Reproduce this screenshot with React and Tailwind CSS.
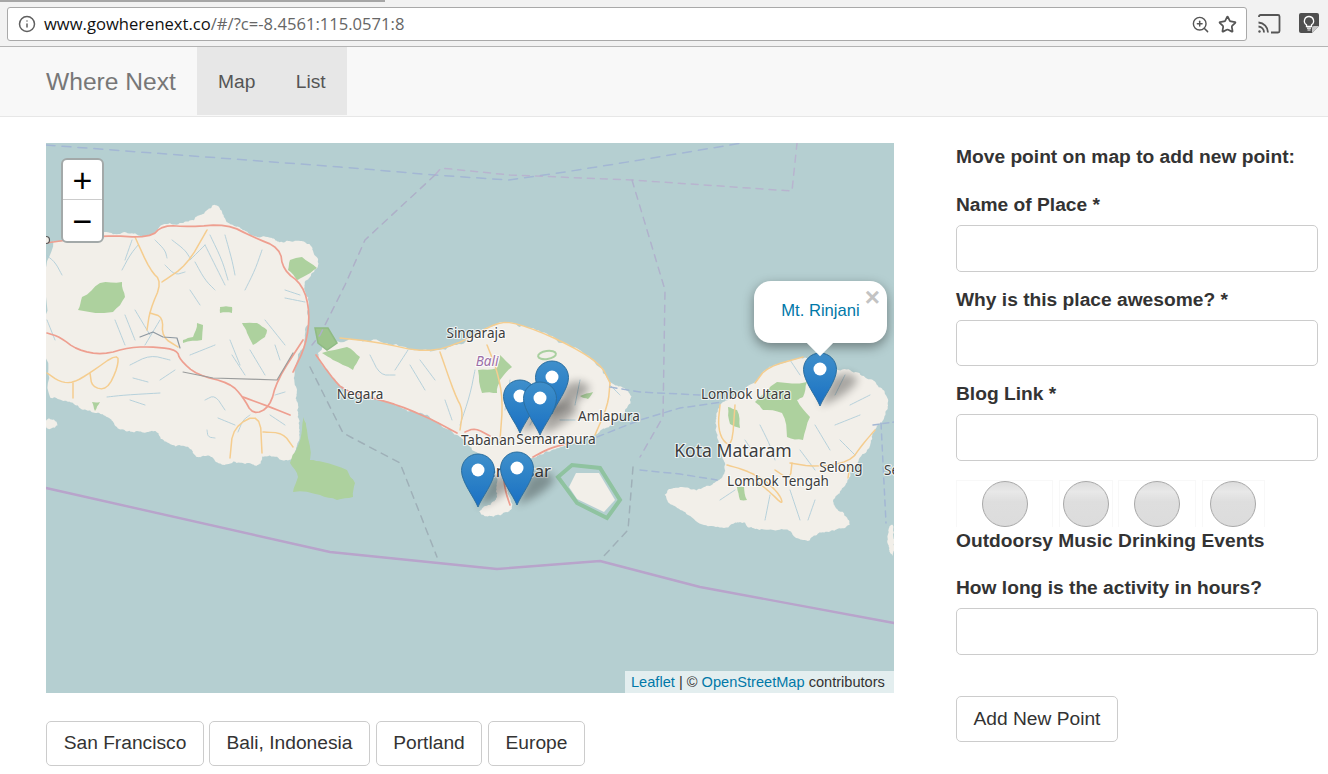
import React from "react";
import { Info, ZoomIn, Star } from "lucide-react";

const FONT = { fontFamily: '"Liberation Sans", Arial, sans-serif' };

const pts = (a) => a.map((p) => p.join(",")).join(" ");

function chaikin(a, closed, n = 2) {
  let cur = a;
  for (let k = 0; k < n; k++) {
    const out = closed ? [] : [cur[0]];
    const len = closed ? cur.length : cur.length - 1;
    for (let i = 0; i < len; i++) {
      const p = cur[i];
      const q = cur[(i + 1) % cur.length];
      out.push([p[0] * 0.75 + q[0] * 0.25, p[1] * 0.75 + q[1] * 0.25]);
      out.push([p[0] * 0.25 + q[0] * 0.75, p[1] * 0.25 + q[1] * 0.75]);
    }
    if (!closed) out.push(cur[cur.length - 1]);
    cur = out;
  }
  return cur;
}

function hash(n) {
  const s = Math.sin(n * 127.1 + 311.7) * 43758.5453;
  return s - Math.floor(s) - 0.5;
}

function rough(a, amp = 0.16, levels = 3) {
  let cur = a;
  let seed = a[0][0] + a[0][1];
  for (let k = 0; k < levels; k++) {
    const out = [];
    for (let i = 0; i < cur.length; i++) {
      const p = cur[i];
      const q = cur[(i + 1) % cur.length];
      const dx = q[0] - p[0];
      const dy = q[1] - p[1];
      const d = Math.min(Math.hypot(dx, dy) * amp, 4);
      seed += 1.37;
      const h = hash(seed) * 2;
      const l = Math.hypot(dx, dy) || 1;
      out.push(p);
      out.push([(p[0] + q[0]) / 2 - (dy / l) * d * h, (p[1] + q[1]) / 2 + (dx / l) * d * h]);
    }
    cur = out;
  }
  return cur.map((p) => [Math.round(p[0] * 10) / 10, Math.round(p[1] * 10) / 10]);
}

const LAND = [
  [[46,243],[75,236],[103,233],[130,232],[150,237],[163,223],[190,223],[205,212],[215,203],[222,212],[227,223],[240,228],[253,237],[268,236],[280,243],[290,240],[310,243],[320,263],[312,275],[303,283],[310,313],[303,343],[293,373],[298,400],[297,413],[300,430],[298,445],[290,463],[263,453],[260,467],[247,462],[220,465],[210,455],[197,458],[190,447],[162,442],[157,430],[137,433],[117,428],[107,415],[90,412],[73,403],[63,400],[46,397]],
  [[46,418],[56,420],[58,427],[46,430]],
  [[317,350],[340,338],[377,342],[427,353],[463,342],[497,322],[517,323],[560,340],[600,363],[610,383],[632,393],[630,407],[610,425],[593,437],[560,447],[533,457],[520,465],[510,470],[506,490],[512,505],[512,510],[497,517],[482,516],[478,510],[495,503],[498,490],[493,463],[473,450],[457,433],[427,417],[390,402],[350,395],[337,383],[320,363]],
  [[888,527],[894,524],[894,557],[889,552]],
  [[717,413],[720,405],[755,383],[767,367],[803,357],[837,367],[867,375],[887,393],[888,413],[873,430],[870,447],[853,470],[843,490],[830,503],[853,523],[840,530],[817,533],[807,543],[787,530],[750,530],[743,520],[712,530],[680,510],[663,497],[670,487],[697,490],[717,483],[727,470],[720,447],[715,427]],
];

const GREEN = [
  [[82,297],[100,283],[122,282],[125,297],[113,312],[78,310]],
  [[220,307],[232,307],[232,313],[220,313]],
  [[197,323],[203,325],[202,340],[183,343],[183,340],[193,337]],
  [[242,323],[257,323],[267,330],[265,337],[253,345],[247,333]],
  [[290,260],[302,257],[317,268],[303,277],[297,280],[288,270]],
  [[92,402],[100,402],[95,411]],
  [[303,417],[307,430],[310,460],[323,462],[347,470],[355,483],[353,497],[337,500],[320,495],[293,492],[298,477],[290,463],[297,448],[302,430]],
  [[322,353],[347,347],[360,357],[353,370],[333,360]],
  [[478,370],[497,368],[500,355],[512,367],[500,380],[497,393],[482,393]],
  [[580,396],[593,392],[588,399]],
  [[755,402],[777,382],[807,382],[803,397],[797,400],[810,417],[803,440],[787,437],[782,413],[763,410]],
  [[728,407],[737,410],[740,428],[730,424]],
  [[737,487],[744,487],[747,500],[740,500]],
];

const PINK = [
  [[46,243],[103,235],[150,238],[163,225],[190,227],[227,224],[253,237],[280,248],[283,270],[303,285],[310,313],[306,345],[293,372]],
  [[47,333],[60,337],[77,350],[103,355],[130,347],[157,347],[177,350],[180,360],[197,375],[230,383],[243,397],[253,415],[270,407],[277,380],[303,340]],
  [[243,397],[270,407],[290,415]],
  [[316,355],[330,375],[345,392],[390,402],[427,417],[457,433]],
  [[465,432],[475,428],[490,436]],
  [[533,457],[550,448],[570,443]],
  [[503,470],[505,490],[510,505]],
];

const ORANGE = [
  [[135,237],[150,270],[162,282],[150,310],[147,330]],
  [[162,282],[187,265],[207,230]],
  [[150,313],[163,317],[162,337],[178,347]],
  [[47,373],[60,382],[73,383],[90,373],[118,353],[118,367],[107,390],[92,387],[90,373]],
  [[73,383],[73,398]],
  [[230,458],[233,427],[260,413],[262,453]],
  [[263,432],[283,433],[293,447]],
  [[340,338],[377,342],[427,353],[463,342],[497,322],[517,323],[560,340],[600,363],[610,383]],
  [[440,352],[455,395],[463,410],[460,430]],
  [[487,345],[497,370],[503,400],[500,440]],
  [[610,383],[608,405],[595,435]],
  [[755,383],[767,367],[803,357]],
  [[720,405],[718,425],[722,440],[732,447],[735,405]],
  [[727,465],[745,470],[765,480],[780,495],[783,505],[770,492],[755,480]],
  [[790,463],[815,467],[850,462],[862,445],[875,430]],
  [[792,463],[790,480],[775,470]],
  [[850,465],[848,478]],
];

const RIVERS = [
  [[46,255],[55,262],[62,275]],[[125,260],[132,240]],[[122,270],[130,255],[138,245]],
  [[155,240],[165,250],[167,258]],[[172,240],[185,250],[190,258]],[[190,260],[205,245]],
  [[165,265],[175,275],[185,272]],[[205,245],[215,265],[225,285]],[[210,235],[222,260],[228,280]],
  [[225,235],[232,260],[235,275]],[[195,262],[205,280],[215,290]],[[262,250],[255,270],[245,290]],
  [[285,290],[300,295]],[[285,298],[305,302]],[[190,290],[200,305]],[[115,320],[125,345]],[[125,315],[135,340]],
  [[135,310],[150,335]],[[160,320],[145,345]],[[47,320],[55,340]],[[232,355],[245,375]],[[250,350],[265,375]],
  [[275,345],[280,360]],[[265,320],[285,345]],[[190,355],[215,345]],[[230,340],[240,365]],
  [[130,365],[150,355],[170,360]],[[160,380],[175,370]],[[133,378],[148,382]],[[107,397],[125,395],[160,393]],
  [[130,400],[145,405]],[[205,400],[215,395],[225,410]],[[218,418],[235,425]],[[207,430],[208,437],[215,438]],
  [[238,432],[243,420],[250,415]],[[275,395],[285,392]],[[270,415],[285,425]],
  [[370,355],[380,375],[395,375]],[[395,370],[408,350]],[[420,360],[435,380]],[[475,370],[470,395],[460,425]],
  [[510,380],[505,410]],[[540,405],[530,425]],[[580,380],[575,405]],[[560,420],[575,420]],[[610,385],[620,395]],
  [[410,365],[425,390]],[[445,400],[452,420]],
  [[790,360],[800,375]],[[815,370],[810,385]],[[845,375],[835,395]],[[870,395],[850,405]],[[860,415],[835,425]],
  [[815,425],[830,450]],[[800,450],[815,470]],[[840,440],[855,455]],[[760,425],[770,445],[775,460]],
  [[720,500],[735,490]],[[790,490],[800,520]],[[770,495],[765,520]],[[815,500],[808,520]],[[745,440],[755,455]],
];

const LABELS = [
  ["Singaraja", 476, 338, 13.5],
  ["Negara", 360, 399, 13.5],
  ["Amlapura", 609, 421, 13.5],
  ["Tabanan", 488, 445, 13.5],
  ["Semarapura", 556, 444, 13.8],
  ["Lombok Utara", 746, 399, 13.5],
  ["Kota Mataram", 733, 457, 17.6],
  ["Selong", 841, 472, 13.5],
  ["Lombok Tengah", 778, 486, 13.5],
];

function Line({ p, stroke, width = 1, dash, opacity = 1, smooth = true }) {
  return <polyline points={pts(smooth ? chaikin(p, false) : p)} fill="none" stroke={stroke} strokeWidth={width} strokeDasharray={dash} opacity={opacity} strokeLinejoin="round" strokeLinecap="round" />;
}

function Pin({ x, y }) {
  return (
    <g transform={`translate(${x} ${y})`}>
      <path d="M0 0C-4 -10 -16.5 -25 -16.5 -36.5A16.5 16.5 0 0 1 16.5 -36.5C16.5 -25 4 -10 0 0Z" fill="url(#pinFill)" stroke="#2c6f9f" strokeWidth="1" />
      <circle cx="0" cy="-37" r="6.5" fill="#fff" />
    </g>
  );
}

function Shadow({ x, y }) {
  return <path d={`M${x} ${y}L${x + 12} ${y - 28}Q${x + 30} ${y - 38} ${x + 38} ${y - 26}Q${x + 28} ${y - 10} ${x} ${y}Z`} fill="#000" opacity=".3" filter="url(#pinBlur)" />;
}

function MapDrawing() {
  const pins = [[552, 414], [520, 433], [540, 435], [478, 507], [517, 505], [820, 406]];
  return (
    <svg viewBox="46 143 848 550" className="block w-full h-full">
      <defs>
        <linearGradient id="pinFill" x1="0" y1="0" x2="0" y2="1">
          <stop offset="0" stopColor="#3f8fcb" />
          <stop offset=".55" stopColor="#2a7fc6" />
          <stop offset="1" stopColor="#1a6fc4" />
        </linearGradient>
        <filter id="pinBlur" x="-60%" y="-60%" width="220%" height="220%"><feGaussianBlur stdDeviation="4.5" /></filter>
        <filter id="soft" x="-5%" y="-5%" width="110%" height="110%"><feGaussianBlur stdDeviation=".55" /></filter>
      </defs>
      <rect x="46" y="143" width="848" height="550" fill="#b5cfd1" />
      <g filter="url(#soft)">
        {LAND.map((p, i) => <polygon key={i} points={pts(rough(chaikin(p, true, 1)))} fill="#f2efe9" />)}
        {GREEN.map((p, i) => <polygon key={i} points={pts(rough(p, 0.07, 2))} fill="#add19e" />)}
        <polygon points="315,328 328,328 337,343 327,350 318,343" fill="#9cc48c" stroke="#8fbb84" strokeWidth="1.5" />
        <polygon points="569,487 576,473 599,473 615,500 604,512 577,499" fill="#f2efe9" />
        <polygon points="558,477 572,465 600,468 620,500 607,518 577,503" fill="none" stroke="#8fc3a0" strokeWidth="4" />
        <ellipse cx="547" cy="355" rx="9" ry="4" transform="rotate(-8 547 355)" fill="none" stroke="#a9d0a0" strokeWidth="2" />
        {RIVERS.map((p, i) => <Line key={i} p={p} stroke="#abcbd8" width={1} opacity={0.85} />)}
        {ORANGE.map((p, i) => <Line key={i} p={p} stroke="#f5cd8f" width={1.5} />)}
        {PINK.map((p, i) => <Line key={i} p={p} stroke="#ee9f90" width={1.7} />)}
        <Line p={[[140,337],[153,332],[163,337],[177,338],[180,348]]} stroke="#8c97a0" width={1.2} smooth={false} />
        <Line p={[[183,372],[213,378],[277,380],[293,353]]} stroke="#9a9c9c" width={1.2} smooth={false} />
        <Line p={[[46,488],[330,552],[497,569],[600,561],[700,587],[894,623]]} stroke="#b8a4cb" width={2.4} smooth={false} />
        <Line p={[[46,145],[340,167],[435,175],[508,180],[565,172],[640,160],[742,143]]} stroke="#a3b7d4" width={1.5} dash="9 7" smooth={false} />
        <Line p={[[435,175],[441,168],[510,175],[632,180],[792,191],[797,143]]} stroke="#b9aece" width={1.5} dash="7 6" opacity={0.8} smooth={false} />
        <Line p={[[435,175],[365,240],[345,285],[320,335],[312,345]]} stroke="#aeb0c8" width={1.5} dash="7 6" smooth={false} />
        <Line p={[[632,180],[665,290],[663,417],[640,457]]} stroke="#b0b2cc" width={1.5} dash="7 6" smooth={false} />
        <Line p={[[310,367],[343,433],[400,463],[437,557]]} stroke="#9fb0b8" width={1.5} dash="7 6" smooth={false} />
        <Line p={[[633,467],[628,530],[603,557]]} stroke="#9fb0b8" width={1.5} dash="7 6" smooth={false} />
        <Line p={[[597,437],[640,420],[680,408],[723,402]]} stroke="#a3b7d4" width={1.5} dash="7 5" smooth={false} />
        <Line p={[[610,387],[640,392],[700,395]]} stroke="#a3b7d4" width={1.5} dash="7 5" smooth={false} />
        <Line p={[[640,470],[680,474],[717,480]]} stroke="#a3b7d4" width={1.5} dash="7 5" smooth={false} />
        <Line p={[[873,425],[894,422]]} stroke="#a3b7d4" width={1.5} dash="6 4" smooth={false} />
        <Line p={[[881,423],[886,523]]} stroke="#a3b7d4" width={1.5} dash="6 5" smooth={false} />
        <circle cx="46" cy="240" r="3.5" fill="#f2efe9" stroke="#555" strokeWidth="1.2" />
      </g>
      <g fontFamily='"Noto Sans", "Open Sans", sans-serif' textAnchor="middle" paintOrder="stroke" stroke="#ffffff" strokeOpacity=".75" strokeWidth="2.2" strokeLinejoin="round">
        {LABELS.map(([t, x, y, s]) => <text key={t} x={x} y={y} fontSize={s} fill="#3d3d3d">{t}</text>)}
        <text x="487" y="366" fontSize="13.5" fontStyle="italic" fill="#9b6fa8">Bali</text>
        <text x="551" y="477" fontSize="17" fill="#3d3d3d" textAnchor="end">Denpasar</text>
        <text x="884" y="475" fontSize="13.5" fill="#3d3d3d" textAnchor="start">Se</text>
      </g>
      {pins.map(([x, y], i) => <Shadow key={i} x={x} y={y} />)}
      {pins.map(([x, y], i) => <Pin key={i} x={x} y={y} />)}
    </svg>
  );
}

function Field({ label, mt = "mt-[14px]", h = "h-[47px]" }) {
  return (
    <>
      <label className={`block ${mt} h-[26px] leading-[27px] text-[19.2px] font-bold text-[#333] whitespace-nowrap`}>{label}</label>
      <input className={`block mt-[8px] w-[362px] ${h} bg-white border border-[#ccc] rounded-[5px]`} />
    </>
  );
}

function Toggle({ label, w }) {
  return (
    <div className={`flex flex-col items-center ${w}`}>
      <div className="w-full h-[47px] flex justify-center border-x border-t border-[#f8f8f8]">
        <div className="w-[46px] h-[46px] rounded-full border border-[#a8a8a8] bg-[linear-gradient(180deg,#dcdcdc_0%,#e8e8e8_22%,#dedede_45%,#dcdcdc_100%)]" />
      </div>
      <span className="h-[26px] leading-[27px] text-[19.2px] font-bold text-[#333] whitespace-nowrap">{label}</span>
    </div>
  );
}

function Btn({ children, w }) {
  return (
    <button className={`${w} h-[45px] shrink-0 bg-white border border-[#ccc] rounded-[5px] text-[19.2px] text-[#333] whitespace-nowrap`}>{children}</button>
  );
}

export default function App() {
  return (
    <div className="w-[1328px] h-[774px] overflow-hidden bg-white flex flex-col" style={FONT}>
      {/* browser chrome */}
      <div className="h-[47px] shrink-0 bg-[#f2f2f2] border-b border-[#b4b4b4] flex flex-col">
        <div className="h-[2px] w-[385px] bg-[#a6a6a6]" />
        <div className="mt-[5px] flex items-center">
          <div className="ml-[7px] w-[1240px] h-[34px] bg-white border border-[#a9a9a9] rounded-[3px] flex items-center">
            <Info size={18} strokeWidth={2} className="ml-[10px] text-[#5f5f5f]" />
            <span className="ml-[8px] text-[16.6px] whitespace-nowrap text-[#111]" style={{ fontFamily: '"Open Sans", "Noto Sans", sans-serif' }}>
              www.gowherenext.co<span className="text-[#666]">/#/?c=-8.4561:115.0571:8</span>
            </span>
            <div className="ml-auto mr-[9px] flex items-center gap-[9px] text-[#555]">
              <ZoomIn size={19} strokeWidth={1.8} className="translate-x-px" />
              <Star size={19} strokeWidth={2.2} />
            </div>
          </div>
          <svg viewBox="0 0 24 24" className="ml-[10px] w-[24px] h-[24px]" fill="none" stroke="#555" strokeWidth="1.8">
            <path d="M2 5V4.5A1.5 1.5 0 0 1 3.500 3H21a1.500 1.500 0 0 1 1.500 1.500V19A1.500 1.500 0 0 1 21 20.500H14" />
            <path d="M1.500 10.500A10 10 0 0 1 11 20.500" />
            <path d="M1.500 14.500A6 6 0 0 1 7 20.500" />
            <circle cx="2.500" cy="19.500" r="1.200" fill="#555" stroke="none" />
          </svg>
          <svg viewBox="0 0 20 20" className="ml-[18px] w-[20px] h-[20px] -translate-y-px">
            <path d="M2 0H18A2 2 0 0 1 20 2V13L13 20H2A2 2 0 0 1 0 18V2A2 2 0 0 1 2 0Z" fill="#4f4f4f" />
            <path d="M13 20V15A2 2 0 0 1 15 13H20Z" fill="#c9c9c9" />
            <path d="M10 3.500A4.500 4.500 0 0 0 7.500 11.800V13.500H12.500V11.800A4.500 4.500 0 0 0 10 3.500Z" fill="none" stroke="#fff" strokeWidth="1.300" />
            <path d="M8 15.200H12M8.500 17H11.500" stroke="#fff" strokeWidth="1.200" />
          </svg>
        </div>
      </div>

      {/* navbar */}
      <nav className="h-[70px] shrink-0 bg-[#f8f8f8] border-b border-[#e7e7e7] flex pl-[46px]">
        <a className="w-[151px] leading-[69px] text-[24.6px] text-[#777] whitespace-nowrap">Where Next</a>
        <div className="flex bg-[#e7e7e7] h-[68px]">
          <a className="pl-[21px] pr-[20.5px] leading-[69px] text-[19.2px] text-[#555]">Map</a>
          <a className="pl-[20px] pr-[21px] leading-[69px] text-[19.2px] text-[#555]">List</a>
        </div>
      </nav>

      {/* content */}
      <main className="flex pl-[46px] pt-[26px]">
        <div className="w-[848px] shrink-0">
          <div className="relative w-[848px] h-[550px] overflow-hidden">
            <MapDrawing />
            <div className="absolute left-[15px] top-[15px] w-[43px] h-[85px] bg-white border-2 border-[#a3a9a9] rounded-[6px] flex flex-col text-black">
              <div className="h-[40px] border-b border-[#ccc] flex items-center justify-center text-[34px] leading-none">+</div>
              <div className="flex-1 flex items-center justify-center text-[34px] leading-none">−</div>
            </div>
            <div className="absolute left-[708px] top-[138px] w-[133px] h-[62px] bg-white rounded-[17px] shadow-[0_4px_12px_rgba(0,0,0,0.4)] flex items-center justify-center text-[16.6px] text-[#0078a8]">
              <div className="absolute left-[56px] top-[51px] w-[20px] h-[20px] bg-white rotate-45" />
              <span className="relative -top-px">Mt. Rinjani</span>
              <span className="absolute right-[7px] top-[3px] text-[26px] font-bold leading-[26px] text-[#c3c3c3]">×</span>
            </div>
            <div className="absolute right-0 bottom-0 h-[22px] w-[269px] bg-[#e3eeef] pl-[6px] leading-[22px] text-[14.6px] text-[#333] whitespace-nowrap">
              <a className="text-[#0078a8]">Leaflet</a> | © <a className="text-[#0078a8]">OpenStreetMap</a> contributors
            </div>
          </div>
          <div className="mt-[28px] flex gap-[5px]">
            <Btn w="w-[158px]">San Francisco</Btn>
            <Btn w="w-[161px]">Bali, Indonesia</Btn>
            <div className="ml-px"><Btn w="w-[106px]">Portland</Btn></div>
            <div className="ml-px"><Btn w="w-[97px]">Europe</Btn></div>
          </div>
        </div>

        <div className="ml-[62px] w-[362px] shrink-0">
          <div className="h-[26px] leading-[27px] text-[19.2px] font-bold text-[#333] whitespace-nowrap">Move point on map to add new point:</div>
          <Field label="Name of Place *" mt="mt-[22px]" />
          <Field label="Why is this place awesome? *" h="h-[46px]" />
          <Field label="Blog Link *" />
          <div className="mt-[19px] flex gap-[5.5px]">
            <Toggle label="Outdoorsy" w="w-[97px]" />
            <Toggle label="Music" w="w-[54px]" />
            <Toggle label="Drinking" w="w-[78px]" />
            <Toggle label="Events" w="w-[63px]" />
          </div>
          <Field label="How long is the activity in hours?" mt="mt-[21px]" />
          <button className="block mt-[41px] w-[162px] h-[46px] bg-white border border-[#ccc] rounded-[5px] text-[19.2px] text-[#333]">Add New Point</button>
        </div>
      </main>
    </div>
  );
}
